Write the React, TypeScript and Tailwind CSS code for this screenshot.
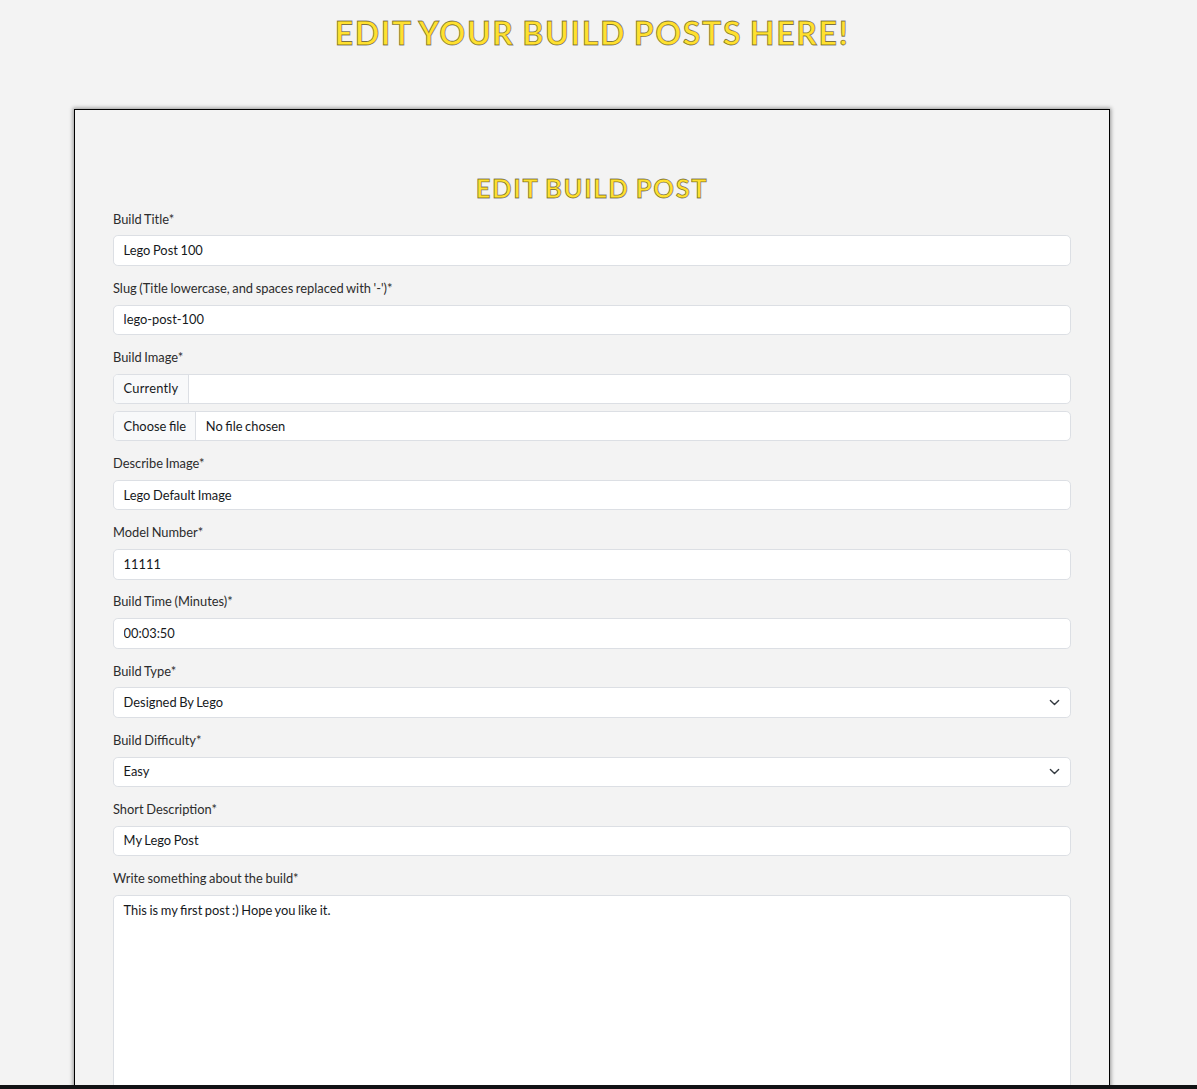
import type { ReactNode } from "react";

const control =
  "flex h-[30.58px] w-full items-center rounded-[4.8px] border border-[#dcdfe4] bg-white text-[#16191c] overflow-hidden [word-spacing:-0.7px]";

function Field({ label, children }: { label: string; children: ReactNode }) {
  return (
    <div className="mb-[12.85px]">
      <label className="block h-[25.75px] leading-[19.3px] text-[#2c2c2c] [word-spacing:-0.7px]">{label}</label>
      {children}
    </div>
  );
}

function TextInput({ value }: { value: string }) {
  return <input className={control + " px-[9.6px] pb-[1.2px] outline-none"} defaultValue={value} />;
}

function Select({ value }: { value: string }) {
  return (
    <div className={control + " justify-between pl-[9.6px] pr-[10.2px]"}>
      <span>{value}</span>
      <svg viewBox="0 0 16 16" className="h-[11px] w-[11px]" fill="none" stroke="#343a40" strokeWidth="2" strokeLinecap="round" strokeLinejoin="round">
        <path d="m2 5 6 6 6-6" />
      </svg>
    </div>
  );
}

export default function App() {
  return (
    <div className="flex h-[1089px] flex-col overflow-hidden bg-[#f3f3f3] font-['Lato',sans-serif] text-[12.86px]">
      <main className="min-h-0 flex-1 overflow-hidden">
        <h1 className="mt-[14px] w-[1184px] text-center text-[32.14px] leading-[38.6px] font-bold tracking-[1.63px] text-[#ffe030] [word-spacing:-1.8px] [-webkit-text-stroke:0.8px_#00000080]">
          EDIT YOUR BUILD POSTS HERE!
        </h1>
        <section className="mt-[56.4px] ml-[74px] h-[1100px] w-[1036px] border border-black px-[38px] pt-[63.4px] shadow-[0_0_4px_1px_rgba(0,0,0,0.4)]">
          <h2 className="text-center text-[25.7px] leading-[30.8px] font-bold tracking-[1.6px] text-[#ffe030] [word-spacing:-1.5px] [-webkit-text-stroke:0.8px_#00000080]">
            EDIT BUILD POST
          </h2>
          <form className="mt-[5.42px]">
            <Field label="Build Title*"><TextInput value="Lego Post 100" /></Field>
            <Field label="Slug (Title lowercase, and spaces replaced with '-')*"><TextInput value="lego-post-100" /></Field>
            <Field label="Build Image*">
              <div className={control + " mb-[6.45px]"}>
                <span className="flex h-full items-center border-r border-[#dcdfe4] bg-[#f8f9fa] px-[9.6px] tracking-[0.2px]">Currently</span>
              </div>
              <div className={control}>
                <span className="flex h-full items-center border-r border-[#dcdfe4] bg-[#f8f9fa] pt-[0.8px] pr-[9.1px] pl-[9.6px]">Choose file</span>
                <span className="pt-[0.8px] pl-[9.6px]">No file chosen</span>
              </div>
            </Field>
            <Field label="Describe Image*"><TextInput value="Lego Default Image" /></Field>
            <Field label="Model Number*"><TextInput value="11111" /></Field>
            <Field label="Build Time (Minutes)*"><TextInput value="00:03:50" /></Field>
            <Field label="Build Type*"><Select value="Designed By Lego" /></Field>
            <Field label="Build Difficulty*"><Select value="Easy" /></Field>
            <Field label="Short Description*"><TextInput value="My Lego Post" /></Field>
            <Field label="Write something about the build*">
              <textarea
                className="block h-[240px] w-full resize-none rounded-[4.8px] border border-[#dcdfe4] bg-white px-[9.6px] py-[5.3px] leading-[19.3px] text-[#16191c] outline-none [word-spacing:-0.7px]"
                defaultValue="This is my first post :) Hope you like it."
              />
            </Field>
          </form>
        </section>
      </main>
      <footer className="h-1 shrink-0 bg-[#111214]" />
    </div>
  );
}
